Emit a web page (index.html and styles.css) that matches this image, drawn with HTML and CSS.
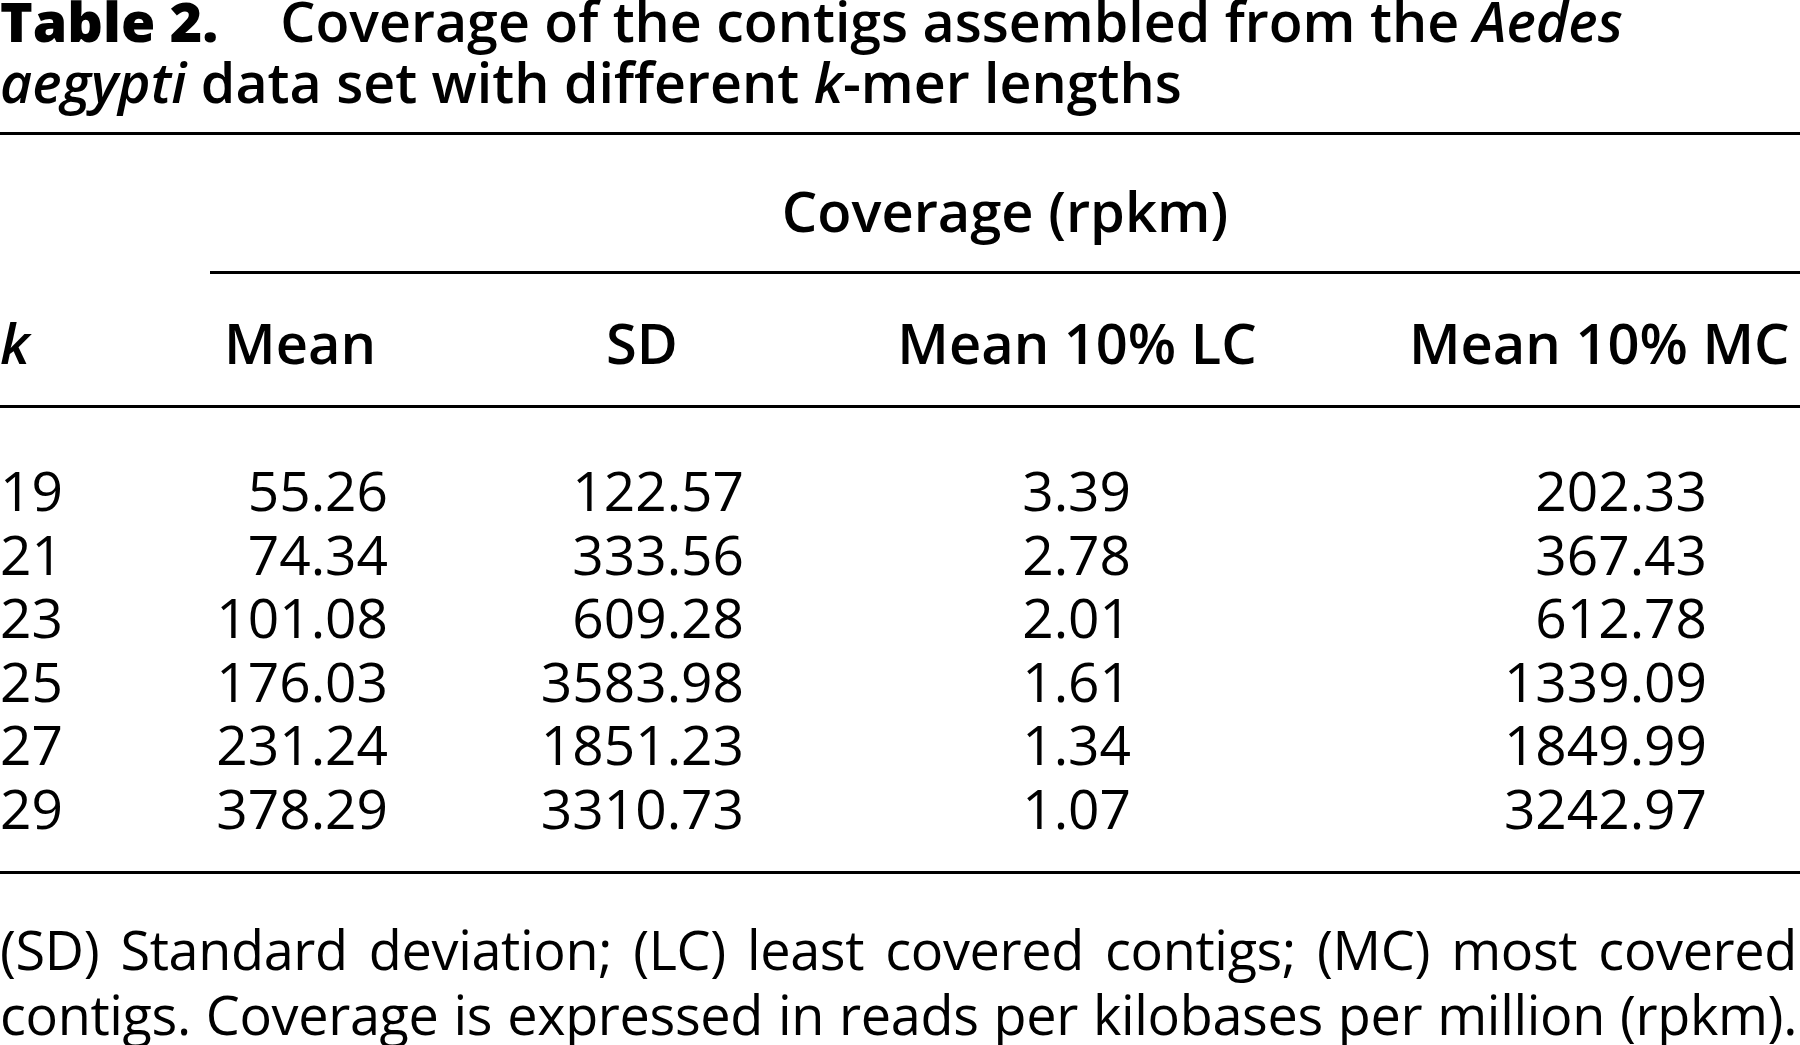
FILE: index.html
```html
<!DOCTYPE html>
<html>
<head>
<meta charset="utf-8">
<title>Table 2</title>
<link rel="stylesheet" href="styles.css">
</head>
<body>
<div class="page">
  <h1 class="caption"><span class="label">Table 2.</span>Coverage of the contigs assembled from the <i>Aedes</i><br><i>aegypti</i> data set with different <i>k</i>-mer lengths</h1>
  <table class="data">
    <colgroup>
      <col class="w0"><col class="w1"><col class="w2"><col class="w3"><col class="w4">
    </colgroup>
    <thead>
      <tr class="group">
        <th class="blank"></th>
        <th class="span" colspan="4">Coverage (rpkm)</th>
      </tr>
      <tr class="heads">
        <th class="kcol"><i>k</i></th>
        <th>Mean</th>
        <th>SD</th>
        <th>Mean 10% LC</th>
        <th class="mc">Mean 10% MC</th>
      </tr>
    </thead>
    <tbody>
      <tr class="first"><td class="k">19</td><td class="c1">55.26</td><td class="c2">122.57</td><td class="c3">3.39</td><td class="c4">202.33</td></tr>
      <tr><td class="k">21</td><td class="c1">74.34</td><td class="c2">333.56</td><td class="c3">2.78</td><td class="c4">367.43</td></tr>
      <tr><td class="k">23</td><td class="c1">101.08</td><td class="c2">609.28</td><td class="c3">2.01</td><td class="c4">612.78</td></tr>
      <tr><td class="k">25</td><td class="c1">176.03</td><td class="c2">3583.98</td><td class="c3">1.61</td><td class="c4">1339.09</td></tr>
      <tr><td class="k">27</td><td class="c1">231.24</td><td class="c2">1851.23</td><td class="c3">1.34</td><td class="c4">1849.99</td></tr>
      <tr class="last"><td class="k">29</td><td class="c1">378.29</td><td class="c2">3310.73</td><td class="c3">1.07</td><td class="c4">3242.97</td></tr>
    </tbody>
  </table>
  <p class="note">(SD) Standard deviation; (LC) least covered contigs; (MC) most covered contigs. Coverage is expressed in reads per kilobases per million (rpkm).</p>
</div>
</body>
</html>
```
FILE: styles.css
```css
html, body {
  margin: 0;
  padding: 0;
  background: #fff;
  overflow: hidden;
}
.page {
  width: 1800px;
  height: 1045px;
  overflow: hidden;
  color: #000;
  font-family: "Open Sans", "Noto Sans", sans-serif;
  font-size: 55px;
}
.caption {
  margin: -10px 0 0 0;
  font-size: 55.5px;
  line-height: 61px;
  font-weight: 600;
  white-space: nowrap;
}
.caption .label {
  font-weight: 800;
  margin-right: 62px;
}
.data {
  margin-top: 20px;
  width: 1800px;
  table-layout: fixed;
  border-collapse: separate;
  border-spacing: 0;
  border-top: 3px solid #000;
}
.w0 { width: 210px; }
.w1 { width: 180px; }
.w2 { width: 504px; }
.w3 { width: 366px; }
.w4 { width: 540px; }
.data th, .data td {
  padding: 0;
  white-space: nowrap;
}
.data th {
  font-size: 56px;
  font-weight: 600;
  text-align: center;
  line-height: 60px;
}
.group th {
  padding-top: 45px;
  padding-bottom: 31px;
}
.group .span {
  border-bottom: 3px solid #000;
}
.group .blank {
  padding-bottom: 34px;
}
.heads th {
  padding-top: 38px;
  padding-bottom: 33px;
  border-bottom: 3px solid #000;
}
.heads .kcol {
  text-align: left;
}
.heads .mc {
  text-align: left;
  padding-left: 149px;
}
.data td {
  font-weight: 400;
  line-height: 63.6px;
  text-align: right;
}
.data td.k { text-align: left; }
.data td.c1 { padding-right: 2px; }
.data td.c2 { padding-right: 150px; }
.data td.c3 { padding-right: 129px; }
.data td.c4 { padding-right: 93px; }
.data tr.first td { padding-top: 50px; }
.data tr.last td {
  padding-bottom: 31px;
  border-bottom: 3px solid #000;
}
.note {
  margin: 43px 0 0 0;
  font-size: 54px;
  letter-spacing: -0.35px;
  line-height: 65px;
  width: 1797px;
  text-align: justify;
  text-align-last: justify;
}
```
